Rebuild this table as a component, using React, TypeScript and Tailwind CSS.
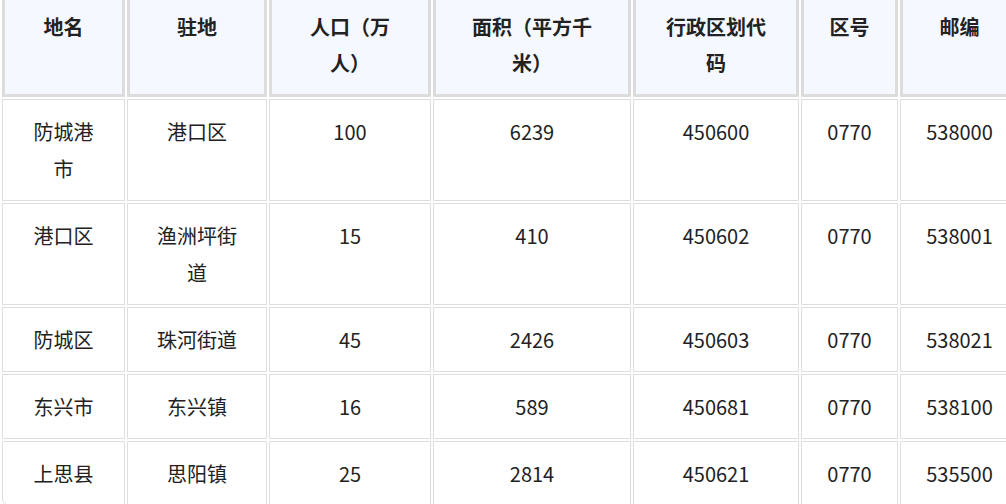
const headers = [
  { label: "地名", w: "w-[123px]" },
  { label: "驻地", w: "w-[140px]" },
  { label: "人口（万人）", w: "w-[162px]" },
  { label: "面积（平方千米）", w: "w-[198px]" },
  { label: "行政区划代码", w: "w-[166px]" },
  { label: "区号", w: "w-[97px]" },
  { label: "邮编", w: "w-[119px]" },
];

const rows = [
  ["防城港市", "港口区", "100", "6239", "450600", "0770", "538000"],
  ["港口区", "渔洲坪街道", "15", "410", "450602", "0770", "538001"],
  ["防城区", "珠河街道", "45", "2426", "450603", "0770", "538021"],
  ["东兴市", "东兴镇", "16", "589", "450681", "0770", "538100"],
  ["上思县", "思阳镇", "25", "2814", "450621", "0770", "535500"],
];

export default function App() {
  return (
    <div
      className="w-[1006px] h-[504px] overflow-hidden bg-white text-[#222]"
      style={{ fontFamily: '"Noto Sans CJK SC", "Noto Sans", sans-serif' }}
    >
      <table className="-mt-[9px] w-[1021px] table-fixed border-separate border-spacing-[2px] text-[20px]">
        <thead>
          <tr>
            {headers.map((h, i) => (
              <th
                key={h.label}
                className={`${h.w} border-[3px] border-[#dcdcdc] bg-[#f5f9ff] px-6 py-[13px] text-center align-top font-bold leading-[36px] ${
                  i === 0 ? "rounded-tl-lg" : ""
                }`}
              >
                {h.label}
              </th>
            ))}
          </tr>
        </thead>
        <tbody>
          {rows.map((row, r) => (
            <tr key={row[0] + r}>
              {row.map((cell, c) => (
                <td
                  key={c}
                  className={`border border-[#dedede] bg-white px-6 py-[13px] text-center align-top leading-[37px] ${
                    r === rows.length - 1 && c === 0 ? "rounded-bl-lg" : ""
                  }`}
                >
                  {cell}
                </td>
              ))}
            </tr>
          ))}
        </tbody>
      </table>
    </div>
  );
}
